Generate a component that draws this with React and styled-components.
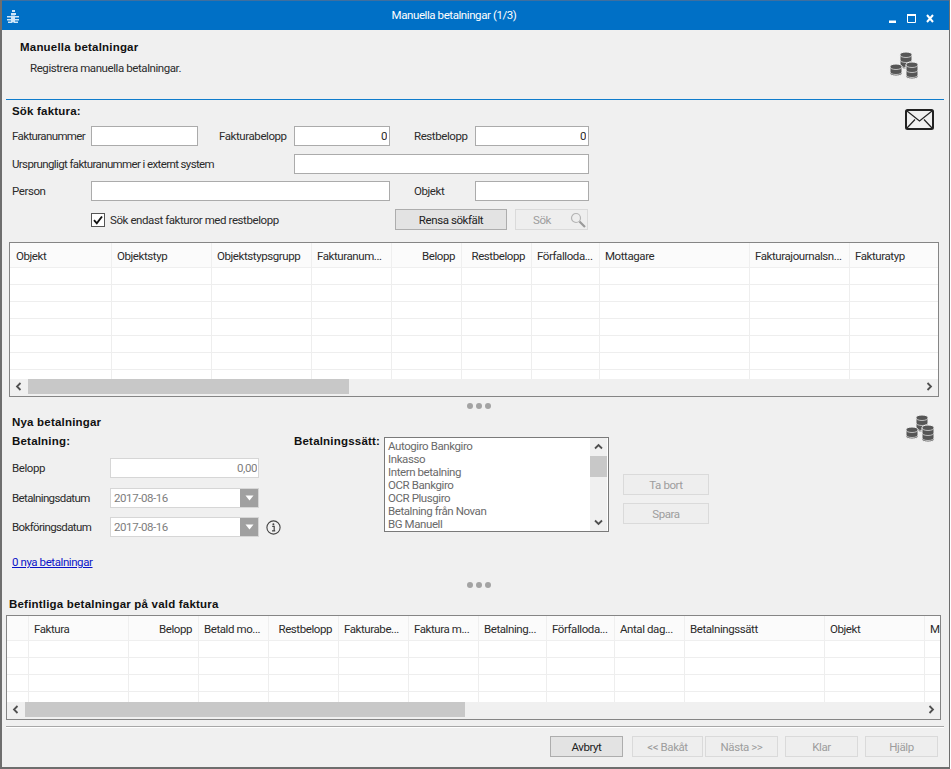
import styled, { createGlobalStyle } from 'styled-components'

const GlobalStyle = createGlobalStyle`
    * { box-sizing: border-box; }
    html, body { margin: 0; padding: 0; background: #fff; }
    body { font-family: Roboto, "Liberation Sans", sans-serif; font-size: 11.5px; letter-spacing: -0.42px; color: #2b2b2b; }
`

const Window = styled.div`
    width: 950px;
    height: 769px;
    background: #f0f0f0;
    border-left: 2px solid #6e6e6e;
    border-right: 1px solid #6e6e6e;
    border-bottom: 2px solid #6e6e6e;
    display: flex;
    flex-direction: column;
    overflow: hidden;
`

const TitleBar = styled.div`
    height: 30px;
    margin-left: -2px;
    margin-right: -1px;
    background: #0070c6;
    border-top: 1px solid #3f6f9f;
    display: flex;
    align-items: center;
    color: #fff;
    flex: none;
`

const AppIcon = styled.svg`
    width: 16px;
    height: 16px;
    margin-left: 5px;
    flex: none;
`

const TitleText = styled.div`
    flex: 1;
    text-align: center;
    font-size: 11.5px;
    margin-top: -1px;
`

const WindowButtons = styled.div`
    display: flex;
    align-items: center;
    gap: 10px;
    padding: 5px 16px 0 0;
`

const Header = styled.div`
    height: 70px;
    margin: 0 5px 0 4px;
    padding: 10px 25px 0 14px;
    border-bottom: 1px solid #0f7ccc;
    display: flex;
    justify-content: space-between;
    flex: none;
`

const PageTitle = styled.div`
    font-family: "Liberation Sans", sans-serif;
    font-weight: bold;
    font-size: 11.5px;
    letter-spacing: 0.2px;
    line-height: 14px;
    color: #111;
`

const PageSub = styled.div`
    line-height: 14px;
    margin: 7px 0 0 10px;
`

const CoinsBox = styled.div`
    padding-top: ${props => props.$top || 0}px;
    flex: none;
`

const Search = styled.div`
    height: 142px;
    padding: 4px 15px 0 10px;
    display: flex;
    justify-content: space-between;
    flex: none;
`

const SectionTitle = styled.div`
    font-family: "Liberation Sans", sans-serif;
    font-weight: bold;
    font-size: 11.5px;
    letter-spacing: 0.2px;
    line-height: 14px;
    color: #111;
`

const Row = styled.div`
    display: flex;
    align-items: center;
    height: ${props => props.$h || 20}px;
    margin-top: ${props => props.$mt || 0}px;
`

const Label = styled.div`
    width: ${props => props.$w}px;
    margin-left: ${props => props.$ml || 0}px;
    letter-spacing: ${props => props.$tight ? '-0.62px' : 'inherit'};
    flex: none;
    white-space: nowrap;
`

const TextBox = styled.input`
    width: ${props => props.$w}px;
    height: 20px;
    flex: none;
    border: 1px solid #ababab;
    background: #fff;
    padding: 0 2px;
    font: inherit;
    letter-spacing: inherit;
    color: #2b2b2b;
    text-align: ${props => props.$right ? 'right' : 'left'};
    outline: none;
`

const DisabledBox = styled(TextBox)`
    border-color: #d6d6d6;
    color: #7d7d7d;
    padding: 0 1px;
`

const CheckBox = styled.span`
    width: 14px;
    height: 14px;
    border: 1px solid #555;
    background: #fff;
    flex: none;
    display: flex;
    align-items: center;
    justify-content: center;
`

const CheckText = styled.span`
    margin-left: 5px;
    width: 285px;
    flex: none;
`

const Button = styled.div`
    width: ${props => props.$w}px;
    height: ${props => props.$h || 21}px;
    margin-left: ${props => props.$ml || 0}px;
    flex: none;
    background: ${props => props.$off ? '#eeeeee' : '#e3e3e3'};
    border: 1px solid ${props => props.$off ? '#dadada' : '#adadad'};
    color: ${props => props.$off ? '#9d9d9d' : '#222'};
    display: flex;
    align-items: center;
    justify-content: center;
`

const SearchButton = styled(Button)`
    padding-left: 16px;
    gap: 19px;
`

const GridBox = styled.div`
    width: ${props => props.$w}px;
    margin-left: ${props => props.$ml}px;
    border: 1px solid #858585;
    background: #fff;
    flex: none;
    overflow: hidden;
`

const GridHead = styled.div`
    height: 25px;
    display: flex;
    background: #fbfbfb;
    border-bottom: 1px solid #efefef;
`

const HeadCell = styled.div`
    width: ${props => props.$w}px;
    flex: none;
    padding: 1px 6px 0 5px;
    line-height: 25px;
    white-space: nowrap;
    overflow: hidden;
    text-align: ${props => props.$right ? 'right' : 'left'};
    border-left: 1px solid #efefef;

    &:first-child {
        border-left-color: transparent;
    }
`

const GridBody = styled.div`
    height: ${props => props.$h}px;
    overflow: hidden;
`

const GridRow = styled.div`
    height: 17px;
    display: flex;
    border-bottom: 1px solid #eeeeee;
`

const GridCell = styled.div`
    width: ${props => props.$w}px;
    flex: none;
    border-left: 1px solid #eeeeee;

    &:first-child {
        border-left-color: transparent;
    }
`

const HScroll = styled.div`
    height: 17px;
    display: flex;
    background: #f0f0f0;
`

const ScrollArrow = styled.div`
    width: ${props => props.$w || 18}px;
    flex: none;
    display: flex;
    align-items: center;
    justify-content: center;
    padding-bottom: 2px;
`

const HThumb = styled.div`
    width: ${props => props.$w}px;
    height: 15px;
    background: #c8c8c8;
    flex: none;
`

const ScrollRest = styled.div`
    flex: 1;
`

const Splitter = styled.div`
    height: 18px;
    display: flex;
    align-items: center;
    justify-content: center;
    gap: 3px;
    padding-left: 7px;
    flex: none;
`

const Dot = styled.span`
    width: 6px;
    height: 6px;
    border-radius: 50%;
    background: #a3a3a3;
`

const NewPayments = styled.div`
    height: 161px;
    padding: 0 14px 0 10px;
    display: flex;
    justify-content: space-between;
    flex: none;
`

const NewColumns = styled.div`
    display: flex;
    margin-top: 5px;
`

const PaymentColumn = styled.div`
    width: 282px;
    flex: none;
`

const DateBox = styled.div`
    width: 149px;
    height: 20px;
    border: 1px solid #d6d6d6;
    background: #fff;
    color: #7d7d7d;
    display: flex;
    align-items: center;
    justify-content: space-between;
    padding-left: 3px;
    flex: none;
`

const DateButton = styled.span`
    width: 18px;
    height: 18px;
    background: #a0a0a0;
    display: flex;
    align-items: center;
    justify-content: center;
`

const InfoIcon = styled.svg`
    width: 15px;
    height: 15px;
    margin-left: 7px;
    flex: none;
`

const NewLink = styled.a`
    display: block;
    margin-top: 18px;
    line-height: 14px;
    color: #0a14c8;
    text-decoration: underline;
`

const ListBox = styled.div`
    width: 225px;
    height: 95px;
    margin: 3px 0 0 0;
    border: 1px solid #7a7a7a;
    background: #fff;
    display: flex;
    flex: none;
    overflow: hidden;
`

const ListItems = styled.div`
    flex: 1;
    padding: 2px 0 0 3px;
    color: #6a6a6a;
`

const ListItem = styled.div`
    height: 13px;
    line-height: 13px;
    white-space: nowrap;
`

const VScroll = styled.div`
    width: 17px;
    margin-right: 1px;
    background: #f0f0f0;
    flex: none;
    display: flex;
    flex-direction: column;
`

const VArrow = styled.div`
    height: ${props => props.$h}px;
    flex: none;
    display: flex;
    align-items: center;
    justify-content: center;
`

const VThumb = styled.div`
    height: 21px;
    background: #c8c8c8;
    flex: none;
`

const VRest = styled.div`
    flex: 1;
`

const SideButtons = styled.div`
    display: flex;
    flex-direction: column;
    gap: 8px;
    margin: 40px 0 0 14px;
`

const GridTitle = styled.div`
    height: 21px;
    padding-left: 7px;
    font-family: "Liberation Sans", sans-serif;
    font-weight: bold;
    font-size: 11.5px;
    letter-spacing: 0.2px;
    line-height: 20px;
    color: #111;
    flex: none;
`

const FooterLine = styled.div`
    height: 2px;
    margin: 6px 5px 0 4px;
    background: #a8a8a8;
    border-bottom: 1px solid #fff;
    flex: none;
`

const FooterButtons = styled.div`
    display: flex;
    justify-content: flex-end;
    padding-right: 11px;
    margin-top: 8px;
`

const Coins = () => {
    // back stack first, the front ones cover it
    const stacks = [
        { x: 11, y: 0, n: 3 },
        { x: 1, y: 12, n: 2 },
        { x: 17, y: 10, n: 3 },
    ]
    return (
        <svg width="30" height="28" viewBox="0 0 30 28">
            {stacks.map(s => {
                const h = s.n * 5
                return (
                    <g key={s.x}>
                        <path fill="#565656" stroke="#f0f0f0" strokeWidth="1"
                            d={`M${s.x} ${s.y + 2.5}a6 2.5 0 0 1 12 0v${h - 3}a6 2.5 0 0 1-12 0z`} />
                        {Array.from({ length: s.n }).map((_, i) =>
                            <path key={i} fill="none" stroke="#d8d8d8" strokeWidth="0.8"
                                d={`M${s.x} ${s.y + 3 + i * 5}a6 2.5 0 0 0 12 0`} />
                        )}
                    </g>
                )
            })}
        </svg>
    )
}

const Envelope = () =>
    <svg width="29" height="21" viewBox="0 0 29 21" fill="none" stroke="#222">
        <rect x="1" y="1" width="27" height="19" rx="1.5" strokeWidth="2" />
        <path d="M2 2l12.5 10L27 2M2 19l8-8.5M27 19l-8-8.5" strokeWidth="1.2" />
    </svg>

const Magnifier = () =>
    <svg width="16" height="16" viewBox="0 0 16 16" fill="none">
        <circle cx="6" cy="6" r="4.5" stroke="#b4b4b4" strokeWidth="1.2" />
        <path d="M9.5 9.5L15 15" stroke="#9a9a9a" strokeWidth="2.2" />
    </svg>

const Check = () =>
    <svg width="10" height="10" viewBox="0 0 10 10" fill="none">
        <path d="M1 5.2L3.8 8.3L9 1.5" stroke="#111" strokeWidth="1.9" />
    </svg>

const Chevron = ({ dir }) => {
    const paths = { left: 'M5.5 1L2 4.5L5.5 8', right: 'M2.5 1L6 4.5L2.5 8', up: 'M1 5.5L4.5 2L8 5.5', down: 'M1 2.5L4.5 6L8 2.5' }
    return (
        <svg width="9" height="9" viewBox="0 0 9 9" fill="none">
            <path d={paths[dir]} stroke="#505050" strokeWidth="1.8" />
        </svg>
    )
}

const DropArrow = () =>
    <svg width="9" height="6" viewBox="0 0 9 6">
        <path d="M0.5 0.5H8.5L4.5 5.5z" fill="#fff" />
    </svg>

const DataGrid = ({ w, ml, columns, bodyH, rows, thumb, leftArrow }) =>
    <GridBox $w={w} $ml={ml}>
        <GridHead>
            {columns.map((c, i) => <HeadCell key={i} $w={c.w} $right={c.right}>{c.title}</HeadCell>)}
        </GridHead>
        <GridBody $h={bodyH}>
            {Array.from({ length: rows }).map((_, r) =>
                <GridRow key={r}>
                    {columns.map((c, i) => <GridCell key={i} $w={c.w} />)}
                </GridRow>
            )}
        </GridBody>
        <HScroll>
            <ScrollArrow $w={leftArrow}><Chevron dir="left" /></ScrollArrow>
            <HThumb $w={thumb} />
            <ScrollRest />
            <ScrollArrow><Chevron dir="right" /></ScrollArrow>
        </HScroll>
    </GridBox>

const invoiceColumns = [
    { title: 'Objekt', w: 101 },
    { title: 'Objektstyp', w: 100 },
    { title: 'Objektstypsgrupp', w: 100 },
    { title: 'Fakturanum...', w: 80 },
    { title: 'Belopp', w: 70, right: true },
    { title: 'Restbelopp', w: 70, right: true },
    { title: 'Förfalloda...', w: 68 },
    { title: 'Mottagare', w: 150 },
    { title: 'Fakturajournalsn...', w: 100 },
    { title: 'Fakturatyp', w: 89 },
]

const paymentColumns = [
    { title: '', w: 21 },
    { title: 'Faktura', w: 100 },
    { title: 'Belopp', w: 70, right: true },
    { title: 'Betald mo...', w: 70 },
    { title: 'Restbelopp', w: 70, right: true },
    { title: 'Fakturabe...', w: 70 },
    { title: 'Faktura m...', w: 70 },
    { title: 'Betalning...', w: 68 },
    { title: 'Förfalloda...', w: 68 },
    { title: 'Antal dag...', w: 70 },
    { title: 'Betalningssätt', w: 140 },
    { title: 'Objekt', w: 100 },
    { title: 'M', w: 16 },
]

const paymentMethods = ['Autogiro Bankgiro', 'Inkasso', 'Intern betalning', 'OCR Bankgiro', 'OCR Plusgiro', 'Betalning från Novan', 'BG Manuell']

function App() {
    return (
        <Window>
            <GlobalStyle />
            <TitleBar>
                <AppIcon viewBox="0 0 16 16">
                    <path d="M7 2h3v2H7zM6 5h5v2H6zM2 8h5v1.5H2zM9 8h5v1.5H9zM2 11h5v1.5H2zM9 11h5v1.5H9zM3 13.5h4V15H3zM9 13.5h4V15H9zM6 7.5h4v7H6z" fill="#cfe6f8" />
                </AppIcon>
                <TitleText>Manuella betalningar (1/3)</TitleText>
                <WindowButtons>
                    <svg width="9" height="9" viewBox="0 0 9 9"><path d="M2 6.5h7v2.5H2z" fill="#fff" /></svg>
                    <svg width="10" height="9" viewBox="0 0 10 9" fill="none"><path d="M1.5 1.5h8v7h-8z" stroke="#fff" /><path d="M1 0h9v2H1z" fill="#fff" /></svg>
                    <svg width="8" height="9" viewBox="0 0 8 9" fill="none"><path d="M1 1l6 7M7 1L1 8" stroke="#fff" strokeWidth="2" /></svg>
                </WindowButtons>
            </TitleBar>

            <Header>
                <div>
                    <PageTitle>Manuella betalningar</PageTitle>
                    <PageSub>Registrera manuella betalningar.</PageSub>
                </div>
                <CoinsBox $top={12}><Coins /></CoinsBox>
            </Header>

            <Search>
                <div>
                    <SectionTitle>Sök faktura:</SectionTitle>
                    <Row $mt={8}>
                        <Label $w={79} $tight>Fakturanummer</Label>
                        <TextBox $w={107} readOnly value="" />
                        <Label $w={75} $ml={21}>Fakturabelopp</Label>
                        <TextBox $w={96} $right readOnly value="0" />
                        <Label $w={61} $ml={24}>Restbelopp</Label>
                        <TextBox $w={114} $right readOnly value="0" />
                    </Row>
                    <Row $mt={8}>
                        <Label $w={282} $tight>Ursprungligt fakturanummer i externt system</Label>
                        <TextBox $w={295} readOnly value="" />
                    </Row>
                    <Row $mt={7}>
                        <Label $w={79}>Person</Label>
                        <TextBox $w={299} readOnly value="" />
                        <Label $w={61} $ml={24}>Objekt</Label>
                        <TextBox $w={114} readOnly value="" />
                    </Row>
                    <Row $mt={8} $h={21}>
                        <Label $w={79} />
                        <CheckBox><Check /></CheckBox>
                        <CheckText>Sök endast fakturor med restbelopp</CheckText>
                        <Button $w={112}>Rensa sökfält</Button>
                        <SearchButton $w={73} $ml={8} $off>Sök<Magnifier /></SearchButton>
                    </Row>
                </div>
                <CoinsBox $top={5}><Envelope /></CoinsBox>
            </Search>

            <DataGrid w={930} ml={7} columns={invoiceColumns} bodyH={111} rows={7} thumb={321} leftArrow={18} />

            <Splitter><Dot /><Dot /><Dot /></Splitter>

            <NewPayments>
                <div>
                    <SectionTitle>Nya betalningar</SectionTitle>
                    <NewColumns>
                        <PaymentColumn>
                            <SectionTitle>Betalning:</SectionTitle>
                            <Row $mt={10}>
                                <Label $w={98}>Belopp</Label>
                                <DisabledBox $w={149} $right readOnly value="0,00" />
                            </Row>
                            <Row $mt={10}>
                                <Label $w={98} $tight>Betalningsdatum</Label>
                                <DateBox>2017-08-16<DateButton><DropArrow /></DateButton></DateBox>
                            </Row>
                            <Row $mt={9}>
                                <Label $w={98} $tight>Bokföringsdatum</Label>
                                <DateBox>2017-08-16<DateButton><DropArrow /></DateButton></DateBox>
                                <InfoIcon viewBox="0 0 15 15" fill="none">
                                    <circle cx="7.5" cy="7.5" r="6.6" stroke="#444" strokeWidth="1.1" />
                                    <path d="M6.2 6.4h2v4.2M6 10.9h3.2" stroke="#444" strokeWidth="1.2" />
                                    <circle cx="7.4" cy="4.2" r="1" fill="#444" />
                                </InfoIcon>
                            </Row>
                            <NewLink>0 nya betalningar</NewLink>
                        </PaymentColumn>
                        <Label $w={90}><SectionTitle>Betalningssätt:</SectionTitle></Label>
                        <ListBox>
                            <ListItems>
                                {paymentMethods.map(m => <ListItem key={m}>{m}</ListItem>)}
                            </ListItems>
                            <VScroll>
                                <VArrow $h={18}><Chevron dir="up" /></VArrow>
                                <VThumb />
                                <VRest />
                                <VArrow $h={18}><Chevron dir="down" /></VArrow>
                            </VScroll>
                        </ListBox>
                        <SideButtons>
                            <Button $w={86} $off>Ta bort</Button>
                            <Button $w={86} $off>Spara</Button>
                        </SideButtons>
                    </NewColumns>
                </div>
                <CoinsBox><Coins /></CoinsBox>
            </NewPayments>

            <Splitter><Dot /><Dot /><Dot /></Splitter>

            <GridTitle>Befintliga betalningar på vald faktura</GridTitle>
            <DataGrid w={935} ml={4} columns={paymentColumns} bodyH={61} rows={4} thumb={440} leftArrow={18} />

            <FooterLine />
            <FooterButtons>
                <Button $w={73}>Avbryt</Button>
                <Button $w={71} $ml={9} $off>&lt;&lt; Bakåt</Button>
                <Button $w={73} $ml={2} $off>Nästa &gt;&gt;</Button>
                <Button $w={73} $ml={7} $off>Klar</Button>
                <Button $w={73} $ml={7} $off>Hjälp</Button>
            </FooterButtons>
        </Window>
    )
}

export default App
